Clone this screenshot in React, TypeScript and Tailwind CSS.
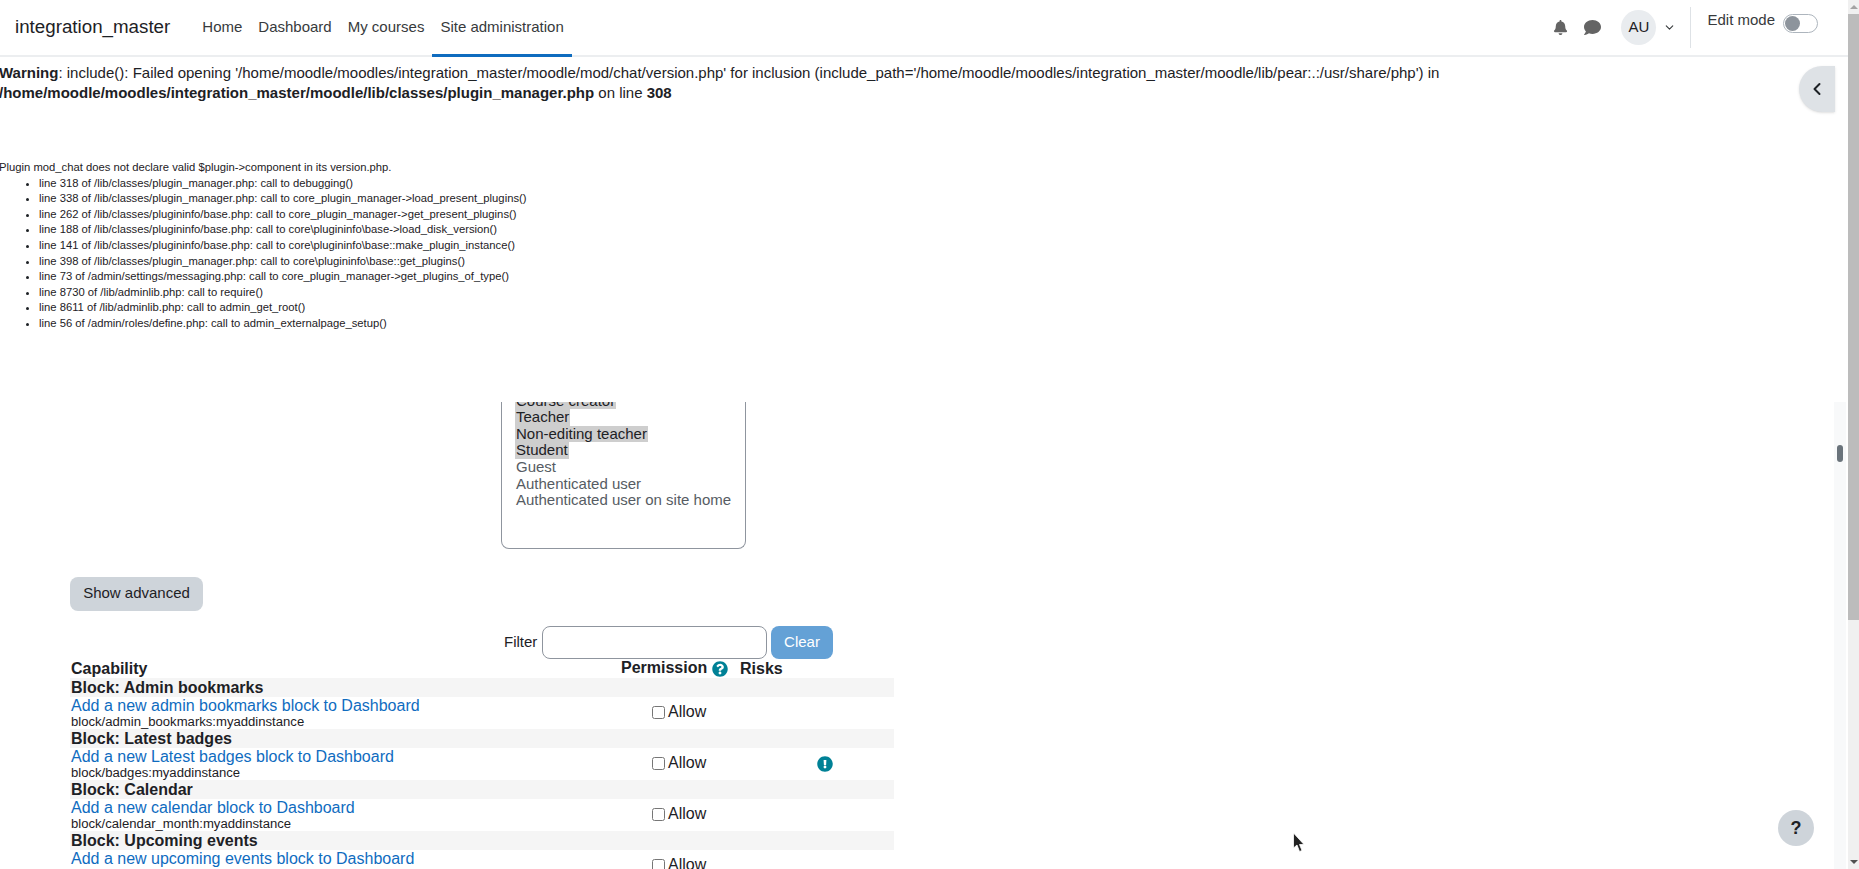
// App.tsx - Moodle define roles page with debug output on top
import { ChevronDown, ChevronLeft } from 'lucide-react';
import { FaBell, FaComment, FaExclamationCircle, FaQuestionCircle } from 'react-icons/fa';

const navItems = ['Home', 'Dashboard', 'My courses', 'Site administration'];

const trace = [
  'line 318 of /lib/classes/plugin_manager.php: call to debugging()',
  'line 338 of /lib/classes/plugin_manager.php: call to core_plugin_manager->load_present_plugins()',
  'line 262 of /lib/classes/plugininfo/base.php: call to core_plugin_manager->get_present_plugins()',
  'line 188 of /lib/classes/plugininfo/base.php: call to core\\plugininfo\\base->load_disk_version()',
  'line 141 of /lib/classes/plugininfo/base.php: call to core\\plugininfo\\base::make_plugin_instance()',
  'line 398 of /lib/classes/plugin_manager.php: call to core\\plugininfo\\base::get_plugins()',
  'line 73 of /admin/settings/messaging.php: call to core_plugin_manager->get_plugins_of_type()',
  'line 8730 of /lib/adminlib.php: call to require()',
  'line 8611 of /lib/adminlib.php: call to admin_get_root()',
  'line 56 of /admin/roles/define.php: call to admin_externalpage_setup()',
];

const capabilities = [
  { group: 'Block: Admin bookmarks', label: 'Add a new admin bookmarks block to Dashboard', code: 'block/admin_bookmarks:myaddinstance' },
  { group: 'Block: Latest badges', label: 'Add a new Latest badges block to Dashboard', code: 'block/badges:myaddinstance', risk: true },
  { group: 'Block: Calendar', label: 'Add a new calendar block to Dashboard', code: 'block/calendar_month:myaddinstance' },
  { group: 'Block: Upcoming events', label: 'Add a new upcoming events block to Dashboard', code: 'block/calendar_upcoming:myaddinstance' },
];

function Header() {
  return (
    <header className="flex h-[57px] shrink-0 items-stretch border-b-2 border-[#eceef0] bg-white text-[#1d2125]">
      <div className="ml-[15px] mr-[24px] flex items-center text-[18.75px]">integration_master</div>
      <nav className="flex items-stretch text-[15px] text-[#373a3c]">
        {navItems.map((item, i) => (
          <a
            key={item}
            className={
              i === 3
                ? 'mb-[-2px] flex items-center border-b-[3px] border-[#0f6cbf] px-2 pt-[1px]'
                : 'flex items-center px-2'
            }
          >
            {item}
          </a>
        ))}
      </nav>
      <div className="ml-auto flex items-center">
        <FaBell className="mr-[16px] text-[15px] text-[#646464]" />
        <FaComment className="mr-[20px] text-[17px] text-[#646464]" />
        <div className="flex h-[35px] w-[35px] items-center justify-center rounded-full bg-[#e9ecef] text-[15px]">AU</div>
        <ChevronDown size={13} strokeWidth={2} className="ml-[7px] text-[#373a3c]" />
        <div className="ml-[14px] h-[41px] w-px self-center bg-[#dee2e6]" />
        <div className="ml-[16px] mr-[30px] flex items-start gap-[8px] self-start pt-[11px]">
          <span className="text-[15px] leading-[17px] text-[#373a3c]">Edit mode</span>
          <span className="mt-[3px] flex h-[19px] w-[35px] items-center rounded-full border border-[#adb5bd] pl-[1px]">
            <span className="h-[15px] w-[15px] rounded-full bg-[#8d949c]" />
          </span>
        </div>
      </div>
    </header>
  );
}

function DebugOutput() {
  return (
    <div className="shrink-0 bg-white text-[#1d2125]">
      <p className="ml-[-1px] pt-[6px] text-[15px] leading-[20px]">
        <b>Warning</b>: include(): Failed opening '/home/moodle/moodles/integration_master/moodle/mod/chat/version.php' for inclusion (include_path='/home/moodle/moodles/integration_master/moodle/lib/pear:.:/usr/share/php') in <b>/home/moodle/moodles/integration_master/moodle/lib/classes/plugin_manager.php</b> on line <b>308</b>
      </p>
      <p className="ml-[-1px] mt-[57px] text-[11.25px] leading-[15.6px]">Plugin mod_chat does not declare valid $plugin-&gt;component in its version.php.</p>
      <ul className="list-disc pl-[39px] text-[11.25px] leading-[15.6px]">
        {trace.map((line) => (
          <li key={line}>{line}</li>
        ))}
      </ul>
    </div>
  );
}

function RoleSelect() {
  return (
    <div className="ml-[501px] h-[147px] w-[245px] overflow-hidden rounded-b-[8px] border border-t-0 border-[#8f959e] pl-[13px] text-[15px] leading-[16.6px] text-[#565c63]">
      <div className="mt-[-9px] w-fit bg-[#cecece] px-[1px] text-[#1d2125]">Course creator</div>
      <div className="w-fit bg-[#cecece] px-[1px] text-[#1d2125]">Teacher</div>
      <div className="w-fit bg-[#cecece] px-[1px] text-[#1d2125]">Non-editing teacher</div>
      <div className="w-fit bg-[#cecece] px-[1px] text-[#1d2125]">Student</div>
      <div className="px-[1px]">Guest</div>
      <div className="px-[1px]">Authenticated user</div>
      <div className="px-[1px]">Authenticated user on site home</div>
    </div>
  );
}

function CapabilityTable() {
  return (
    <div className="ml-[70px] w-[824px] text-[#1d2125]">
      <div className="grid h-[19px] grid-cols-[551px_118px_1fr] text-[16px] font-bold leading-[18px]">
        <div className="pl-px pt-px">Capability</div>
        <div className="flex items-start">
          Permission
          <FaQuestionCircle className="ml-[5px] mt-[2px] text-[16px] text-[#008196]" />
        </div>
        <div className="pl-px pt-px">Risks</div>
      </div>
      {capabilities.map((cap) => (
        <div key={cap.code}>
          <div className="h-[19px] bg-[#f5f5f5] pl-px text-[16px] font-bold leading-[19px]">{cap.group}</div>
          <div className="grid h-[32px] grid-cols-[551px_118px_1fr]">
            <div className="pl-px">
              <a className="block text-[16px] leading-[18px] text-[#0f6cbf]">{cap.label}</a>
              <div className="text-[13.125px] leading-[14px]">{cap.code}</div>
            </div>
            <label className="flex items-center pb-px pl-[31px] text-[16px]">
              <input type="checkbox" className="mr-[3px] h-[13px] w-[13px]" />
              Allow
            </label>
            <div className="flex items-center pl-[78px] pt-px">
              {cap.risk && <FaExclamationCircle className="text-[16px] text-[#008196]" />}
            </div>
          </div>
        </div>
      ))}
    </div>
  );
}

function MainContent() {
  return (
    <div className="min-h-0 flex-1 overflow-hidden bg-white pb-0 text-[#1d2125]">
      <RoleSelect />
      <button className="ml-[70px] mt-[28px] block h-[34px] w-[133px] rounded-[8px] bg-[#ced4da] text-[15px] text-[#1d2125]">
        Show advanced
      </button>
      <div className="ml-[504px] mt-[15px] flex items-center text-[15px]">
        <span className="w-[38px]">Filter</span>
        <span className="h-[33px] w-[225px] rounded-[8px] border border-[#8f959e] bg-white" />
        <span className="ml-[4px] flex h-[33px] w-[62px] items-center justify-center rounded-[8px] bg-[#64a1d6] text-white">
          Clear
        </span>
      </div>
      <CapabilityTable />
    </div>
  );
}

export default function App() {
  return (
    <div className="relative flex h-[869px] w-full overflow-hidden bg-white font-['Liberation_Sans',Arial,sans-serif]">
      <div className="flex min-w-0 flex-1 flex-col">
        <Header />
        <DebugOutput />
        <div className="mt-[70px] flex min-h-0 flex-1">
          <div className="min-w-0 flex-1">
            <div className="flex h-full flex-col">
              <MainContent />
            </div>
          </div>
          {/* inner scrollbar of the page region */}
          <div className="mr-[2px] w-[12px] shrink-0 bg-[#f8f9fa] pl-[3px] pt-[43px]">
            <div className="h-[17px] w-[6px] rounded-full bg-[#6a737b]" />
          </div>
        </div>
      </div>

      {/* browser scrollbar */}
      <div className="flex w-[11px] shrink-0 flex-col bg-[#f0f0f0]">
        <div className="flex h-[14px] items-center justify-center">
          <span className="h-0 w-0 border-x-[4px] border-b-[4px] border-x-transparent border-b-[#a3a3a3]" />
        </div>
        <div className="h-[606px] bg-[#bcbcbc]" />
        <div className="mt-auto flex h-[14px] items-center justify-center">
          <span className="h-0 w-0 border-x-[4px] border-t-[4px] border-x-transparent border-t-[#505050]" />
        </div>
      </div>

      {/* drawer toggle */}
      <div className="absolute left-[1799px] top-[66px] flex h-[46px] w-[36px] items-center justify-center rounded-l-[24px] bg-[#dee2e6] shadow-sm">
        <ChevronLeft size={20} strokeWidth={2.4} className="text-[#1d2125]" />
      </div>

      {/* help button */}
      <div className="absolute left-[1778px] top-[810px] flex h-[36px] w-[36px] items-center justify-center rounded-full bg-[#ced4da] text-[18px] font-bold text-[#1d2125]">
        ?
      </div>

      {/* mouse pointer from the capture */}
      <svg className="absolute left-[1292px] top-[832px]" width="14" height="22" viewBox="0 0 14 22">
        <path d="M1.5 1 L1.5 16 L5 13 L7.5 19.5 L10 18.5 L7.5 12.5 L12 12.5 Z" fill="#222" stroke="#fff" strokeWidth="0.8" />
      </svg>
    </div>
  );
}
